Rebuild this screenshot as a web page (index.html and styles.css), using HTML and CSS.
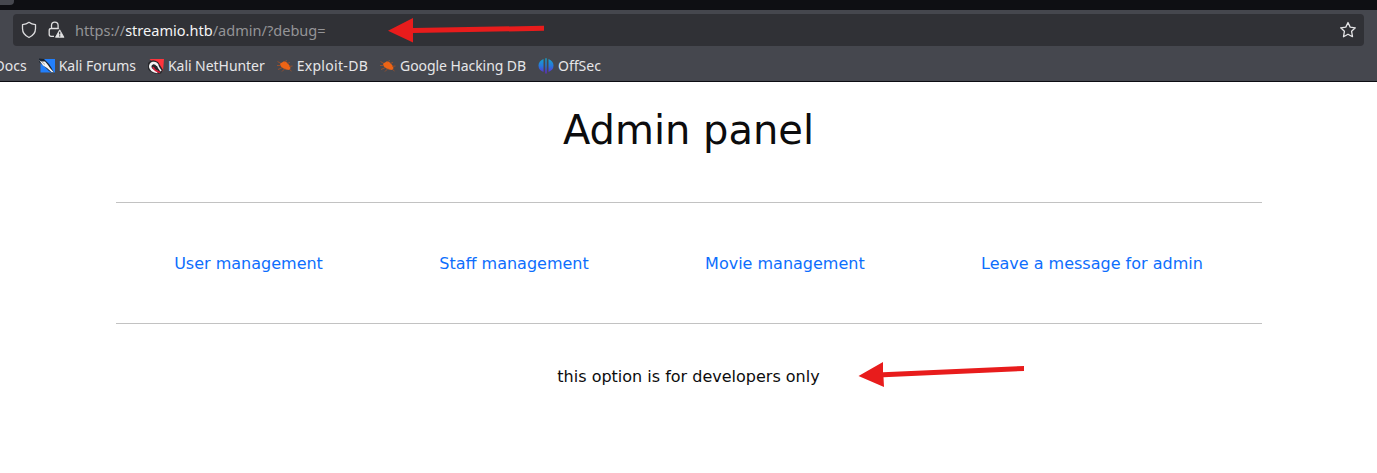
FILE: index.html
```html
<!DOCTYPE html>
<html lang="en">
<head>
<meta charset="utf-8">
<title>Admin panel</title>
<link rel="stylesheet" href="styles.css">
</head>
<body>
<div class="browser">
  <div class="tabstrip"><div class="tab"></div></div>
  <div class="toolbar">
    <div class="urlbar">
      <svg class="shield" width="16" height="18" viewBox="0 0 16 18"><path d="M8 1.300C6.300 2.600 4.100 3.400 1.500 3.600V7.500C1.500 11.600 4.200 14.800 8 16.500C11.800 14.800 14.500 11.600 14.500 7.500V3.600C11.900 3.400 9.700 2.600 8 1.300Z" fill="none" stroke="#dcdcde" stroke-width="1.300" stroke-linejoin="round"/></svg>
      <svg class="lock" width="17" height="18" viewBox="0 0 17 18"><path d="M3.500 7.500V4.500a3.300 3.300 0 0 1 6.600 0V7.500M6 15.300H3Q1.200 15.300 1.200 13.500V9.500Q1.200 7.500 3 7.500H9.500Q10.500 7.500 10.800 8" fill="none" stroke="#dededf" stroke-width="1.300"/><path d="M11.700 8.800L16 16.300H7.500Z" fill="#e3e3e4" stroke="#e3e3e4" stroke-linejoin="round" stroke-width=".8"/><path d="M11.700 10.800V13.500M11.700 14.300V15.500" stroke="#303136" stroke-width="1.200"/></svg>
      <span class="url">https://<b class="host">streamio.htb</b>/admin/?debug=</span>
      <svg class="star" width="18" height="18" viewBox="0 0 18 18"><path d="M9 1.500L11.200 6.100L16.300 6.800L12.600 10.300L13.500 15.700L9 13.200L4.500 15.700L5.400 10.300L1.700 6.800L6.800 6.100Z" fill="none" stroke="#e4e4e6" stroke-width="1.300" stroke-linejoin="round"/></svg>
    </div>
  </div>
  <div class="bookmarks">
    <span class="bookmark docs">Docs</span>
    <span class="bookmark"><svg width="16" height="16" viewBox="0 0 16 16"><path d="M1.500 1H16V14.500H1.500Z" fill="#227ffb"/><path d="M0 .5L5 1L10 6L12 9L15.500 15.500L10 13L6 9L0 4Z" fill="#1b2430"/><path d="M0 2L2 3.500L6 3.500L9 7L11 10L15 14.500L12.500 14L8 10L4 7.500Z" fill="#f5f5f5"/><path d="M3 4L6 6.500" stroke="#888d92" stroke-width=".7"/></svg>Kali Forums</span>
    <span class="bookmark nethunter"><svg width="16" height="16" viewBox="0 0 16 16"><path d="M1.500 1H16L15 13.500Z" fill="#ff343c"/><path d="M0 5Q4 0 10 4L15 12L13 15.500Q4 17 0 11Z" fill="#26272b"/><path d="M9.500 7.500Q8 4.500 5 5Q2 6 2.200 9Q3 13 9.500 14" fill="none" stroke="#f4f4f4" stroke-width="2.400"/><path d="M9 6Q10 9 13 13" fill="none" stroke="#f4f4f4" stroke-width="1.600"/><path d="M5 9Q6.500 13 12 14.500" fill="none" stroke="#d31a36" stroke-width="1.800"/></svg>Kali NetHunter</span>
    <span class="bookmark exploit"><svg width="16" height="16" viewBox="0 0 16 16"><use href="#bug"/></svg>Exploit-DB</span>
    <span class="bookmark google"><svg width="16" height="16" viewBox="0 0 16 16"><g id="bug"><path d="M3 5.500L5 4.500L7 3.300L10 4.500L12.500 7.500L13.500 10L12.500 12L9 11.500Q5 10.500 3.500 8Z" fill="#ee6415"/><path d="M.5 3.500L4 5.500M0 7.500H4M1 11.500L5.500 9.500M5 13.500L8 10.500M7 4L10 2.500M10 5.500L13 4.500M12 8.500L15.500 8M12 11L14.500 13" stroke="#a95025" stroke-width=".8"/></g></svg>Google Hacking DB</span>
    <span class="bookmark"><svg width="16" height="16" viewBox="0 0 16 16"><defs><linearGradient id="off" gradientUnits="userSpaceOnUse" x1="0" y1="0" x2="0" y2="16"><stop offset="0" stop-color="#14a6ca"/><stop offset=".5" stop-color="#2777dc"/><stop offset="1" stop-color="#6520cf"/></linearGradient></defs><path d="M5.500 .9V14Q.5 12 .5 7.500Q.5 3 5.500 .9ZM7.300 .3H8.700V15.500H7.300ZM10.500 .9Q15.500 3 15.500 7.500Q15.500 12 10.500 14Z" fill="url(#off)"/></svg>OffSec</span>
  </div>
</div>
<main class="page">
  <h1 class="title">Admin panel</h1>
  <hr class="rule">
  <ul class="nav">
    <li><a class="link">User management</a></li>
    <li><a class="link">Staff management</a></li>
    <li><a class="link">Movie management</a></li>
    <li><a class="link">Leave a message for admin</a></li>
  </ul>
  <hr class="rule">
  <p class="message">this option is for developers only</p>
</main>
<svg class="annotations" width="1377" height="473" viewBox="0 0 1377 473" fill="#e81c1c">
  <path d="M388 30.700L413 18V28L544 25.800V30.800L413 33V42.500Z"/>
  <path d="M858.500 376L883 362V372.300L1024 366V371L883.500 377.300L884 387Z"/>
</svg>
</body>
</html>
```
FILE: styles.css
```css
* { box-sizing: border-box; }
body {
  margin: 0;
  height: 473px;
  overflow: hidden;
  background: #fff;
  color: #0c0c0d;
  font: 16px/24px "DejaVu Sans", sans-serif;
}
.browser {
  height: 82px;
  background: #45474e;
  border-bottom: 1px solid #0c0c12;
  font-family: "Noto Sans", sans-serif;
}
.tabstrip { height: 10px; background: #0e0f13; }
.tab { width: 14px; height: 5px; background: #45474e; border-radius: 0 0 4px 0; }
.toolbar { padding: 4px 13px 0; }
.urlbar {
  display: flex;
  align-items: center;
  height: 32px;
  padding: 0 7px 0 8px;
  border-radius: 4px;
  background: #303136;
}
.lock { margin-left: 11px; }
.url { margin-left: 10px; color: #949497; font-size: 14.55px; white-space: pre; }
.host { color: #f4f4f5; font-weight: 400; }
.star { margin-left: auto; }
.bookmarks {
  display: flex;
  align-items: center;
  gap: 12px;
  height: 35px;
  padding-top: 5px;
  margin-left: -5.5px;
  color: #e6e6e8;
  font-size: 14px;
  white-space: nowrap;
}
.bookmark { display: flex; align-items: center; gap: 4px; }
.nethunter { letter-spacing: -.05px; }
.exploit { letter-spacing: .3px; }
.google { letter-spacing: -.07px; }
.page { width: 1146px; margin: 0 auto 0 116px; }
.title { margin: 0; padding: 24px 1px 0 0; font-size: 40px; line-height: 48px; font-weight: 400; text-align: center; }
.rule { height: 1px; margin: 0; border: 0; background: #c2c2c2; }
.title + .rule { margin-top: 48px; }
.nav {
  display: flex;
  justify-content: space-around;
  align-items: center;
  height: 120px;
  margin: 0;
  padding: 2px 1px 0 0;
  list-style: none;
}
.link { color: #0d6efd; }
.message { margin: 41px 0 0; padding-right: 1px; text-align: center; }
.annotations { position: absolute; top: 0; left: 0; }
```
